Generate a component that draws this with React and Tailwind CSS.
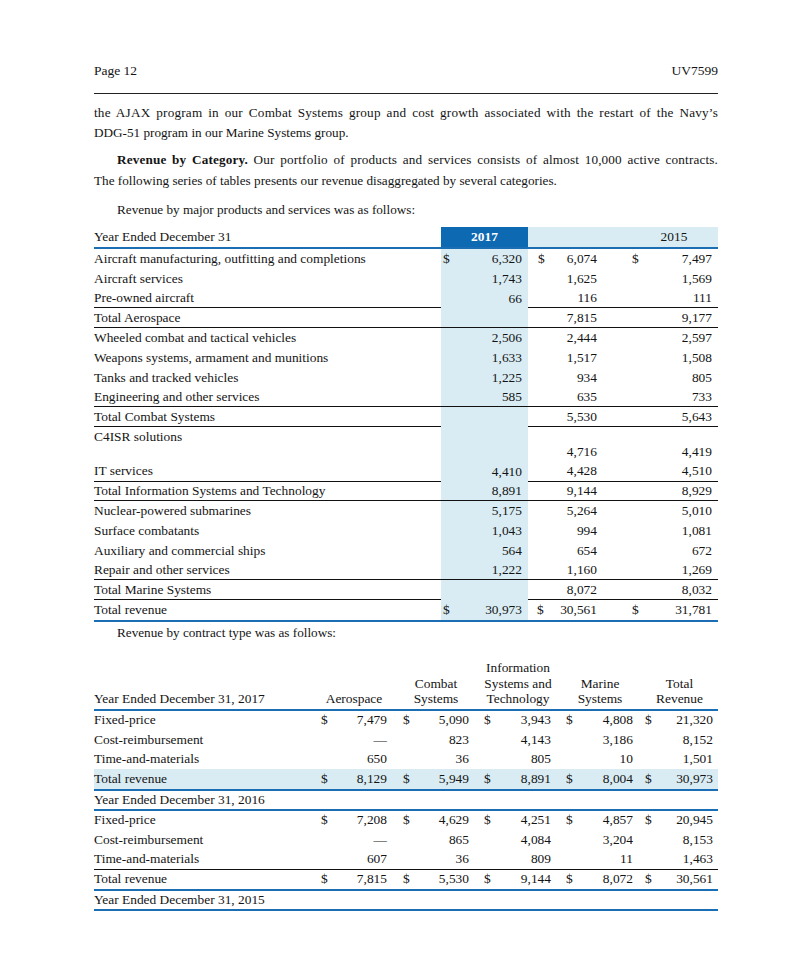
import React from "react";

const BLUE = "border-[#1b6db4]";

const productRows = [
  { label: "Aircraft manufacturing, outfitting and completions", v: ["6,320", "6,074", "7,497"], dollar: true },
  { label: "Aircraft services", v: ["1,743", "1,625", "1,569"] },
  { label: "Pre-owned aircraft", v: ["66", "116", "111"], line: "split" },
  { label: "Total Aerospace", v: ["", "7,815", "9,177"], line: "full" },
  { label: "Wheeled combat and tactical vehicles", v: ["2,506", "2,444", "2,597"] },
  { label: "Weapons systems, armament and munitions", v: ["1,633", "1,517", "1,508"] },
  { label: "Tanks and tracked vehicles", v: ["1,225", "934", "805"] },
  { label: "Engineering and other services", v: ["585", "635", "733"], line: "full" },
  { label: "Total Combat Systems", v: ["", "5,530", "5,643"], line: "split" },
  { label: "C4ISR solutions", v: ["", "4,716", "4,419"], tall: true },
  { label: "IT services", v: ["4,410", "4,428", "4,510"], line: "split" },
  { label: "Total Information Systems and Technology", v: ["8,891", "9,144", "8,929"], line: "full" },
  { label: "Nuclear-powered submarines", v: ["5,175", "5,264", "5,010"] },
  { label: "Surface combatants", v: ["1,043", "994", "1,081"] },
  { label: "Auxiliary and commercial ships", v: ["564", "654", "672"] },
  { label: "Repair and other services", v: ["1,222", "1,160", "1,269"], line: "full" },
  { label: "Total Marine Systems", v: ["", "8,072", "8,032"], line: "split" },
];

// contract type blocks
const contract2017 = [
  { label: "Fixed-price", v: ["7,479", "5,090", "3,943", "4,808", "21,320"], dollar: true },
  { label: "Cost-reimbursement", v: ["—", "823", "4,143", "3,186", "8,152"] },
  { label: "Time-and-materials", v: ["650", "36", "805", "10", "1,501"] },
];
const contract2016 = [
  { label: "Fixed-price", v: ["7,208", "4,629", "4,251", "4,857", "20,945"], dollar: true },
  { label: "Cost-reimbursement", v: ["—", "865", "4,084", "3,204", "8,153"] },
  { label: "Time-and-materials", v: ["607", "36", "809", "11", "1,463"] },
];

const cols2 = [
  "w-[82px] pl-[8px] pr-[8px]",
  "w-[82px] pl-[8px] pr-[8px]",
  "w-[82px] pl-[7px] pr-[8px]",
  "w-[82px] pl-[7px] pr-[8px]",
  "w-[77px] pl-[4px] pr-[5px]",
];

function ProductRow({ r }) {
  const full = r.line === "full";
  const any = r.line === "full" || r.line === "split";
  const align = r.tall ? "items-end" : "items-center";
  return (
    <div className={r.tall ? "flex h-[35px] leading-[19.75px]" : "flex h-[19.75px] leading-[19.75px]"}>
      <div className={`flex w-[347px] ${r.tall ? "items-start" : "items-center"} ${any ? "border-b border-[#111]" : ""}`}>
        {r.label}
      </div>
      <div className={`flex w-[87px] ${align} justify-between bg-[#d9ecf3] pl-[2px] pr-[6px] ${full ? "border-b border-[#111]" : ""}`}>
        <span>{r.dollar ? "$" : ""}</span>
        <span>{r.v[0]}</span>
      </div>
      <div className={`flex w-[102px] ${align} justify-between pl-[10px] pr-[33px] ${any ? "border-b border-[#111]" : ""}`}>
        <span>{r.dollar ? "$" : ""}</span>
        <span>{r.v[1]}</span>
      </div>
      <div className={`flex w-[88px] ${align} justify-between pl-[2px] pr-[6px] ${any ? "border-b border-[#111]" : ""}`}>
        <span>{r.dollar ? "$" : ""}</span>
        <span>{r.v[2]}</span>
      </div>
    </div>
  );
}

function ContractRow({ r, className = "h-[19.5px]" }) {
  return (
    <div className={`flex items-center ${className}`}>
      <div className="w-[219px]">{r.label}</div>
      {r.v.map((n, i) => (
        <div key={i} className={`flex justify-between ${cols2[i]}`}>
          <span>{r.dollar ? "$" : ""}</span>
          <span>{n}</span>
        </div>
      ))}
    </div>
  );
}

export default function App() {
  return (
    <div className="h-[975px] w-[812px] bg-white text-[#141414] [font-family:'Liberation_Serif','Times_New_Roman',serif]">
      <div className="ml-[94px] w-[624px] pt-[61px]">
        <div className="flex justify-between text-[13.5px] leading-5">
          <span>Page 12</span>
          <span>UV7599</span>
        </div>
        <div className="mt-[12px] border-t border-[#222]" />

        <div className="mt-[9px] text-[13.2px] leading-5">
          <div className="text-justify tracking-[0.2px] [text-align-last:justify]">
            the AJAX program in our Combat Systems group and cost growth associated with the restart of the Navy’s
          </div>
          <div>DDG-51 program in our Marine Systems group.</div>
        </div>

        <div className="mt-[7px] text-[13.2px] leading-[20.5px]">
          <div className="pl-[23px] text-justify tracking-[0.15px] [text-align-last:justify]">
            <b>Revenue by Category.</b> Our portfolio of products and services consists of almost 10,000 active contracts.
          </div>
          <div>The following series of tables presents our revenue disaggregated by several categories.</div>
        </div>

        <div className="mt-[9px] pl-[23px] text-[13.2px] leading-5">Revenue by major products and services was as follows:</div>

        {/* revenue by products table */}
        <div className="mt-[7px] text-[13.4px]">
          <div className={`flex h-[22px] border-b-2 ${BLUE}`}>
            <div className="flex w-[347px] items-center">Year Ended December 31</div>
            <div className="flex w-[87px] items-center justify-center bg-[#0e69b3] font-bold text-white">2017</div>
            <div className="w-[102px] bg-[#d9ecf3]" />
            <div className="flex w-[88px] items-center justify-center bg-[#d9ecf3]">2015</div>
          </div>
          {productRows.map((r) => (
            <ProductRow key={r.label} r={r} />
          ))}
          <div className={`flex h-[21.75px] items-center border-b-2 ${BLUE} leading-[19.75px]`}>
            <div className="w-[347px]">Total revenue</div>
            <div className="flex h-full w-[87px] items-center justify-between bg-[#d9ecf3] pl-[2px] pr-[6px]">
              <span>$</span>
              <span>30,973</span>
            </div>
            <div className="flex w-[102px] justify-between pl-[9px] pr-[33px]">
              <span>$</span>
              <span>30,561</span>
            </div>
            <div className="flex w-[88px] justify-between pl-[2px] pr-[6px]">
              <span>$</span>
              <span>31,781</span>
            </div>
          </div>
        </div>

        <div className="mt-[1px] pl-[23px] text-[13.2px] leading-5">Revenue by contract type was as follows:</div>

        {/* revenue by contract type table */}
        <div className="mt-[17.5px] text-[13.4px]">
          <div className={`flex h-[50.5px] items-end border-b-2 ${BLUE} pb-[2px] leading-[15.5px]`}>
            <div className="w-[219px]">Year Ended December 31, 2017</div>
            <div className="w-[82px] text-center">Aerospace</div>
            <div className="w-[82px] text-center">
              Combat
              <br />
              Systems
            </div>
            <div className="w-[82px] text-center">
              Information
              <br />
              Systems and
              <br />
              Technology
            </div>
            <div className="w-[82px] text-center">
              Marine
              <br />
              Systems
            </div>
            <div className="w-[77px] text-center">
              Total
              <br />
              Revenue
            </div>
          </div>
          {contract2017.map((r) => (
            <ContractRow key={r.label} r={r} />
          ))}
          <ContractRow
            r={{ label: "Total revenue", v: ["8,129", "5,949", "8,891", "8,004", "30,973"], dollar: true }}
            className={`h-[21.5px] border-b-2 ${BLUE} bg-[#d9ecf3]`}
          />
          <div className={`flex h-[20px] items-center border-b-2 ${BLUE}`}>Year Ended December 31, 2016</div>
          {contract2016.slice(0, 2).map((r) => (
            <ContractRow key={r.label} r={r} />
          ))}
          <ContractRow r={contract2016[2]} className="h-[20px] border-b border-[#111]" />
          <ContractRow
            r={{ label: "Total revenue", v: ["7,815", "5,530", "9,144", "8,072", "30,561"], dollar: true }}
            className={`h-[21px] border-b-2 ${BLUE}`}
          />
          <div className={`flex h-[20px] items-center border-b-2 ${BLUE}`}>Year Ended December 31, 2015</div>
        </div>
      </div>
    </div>
  );
}
